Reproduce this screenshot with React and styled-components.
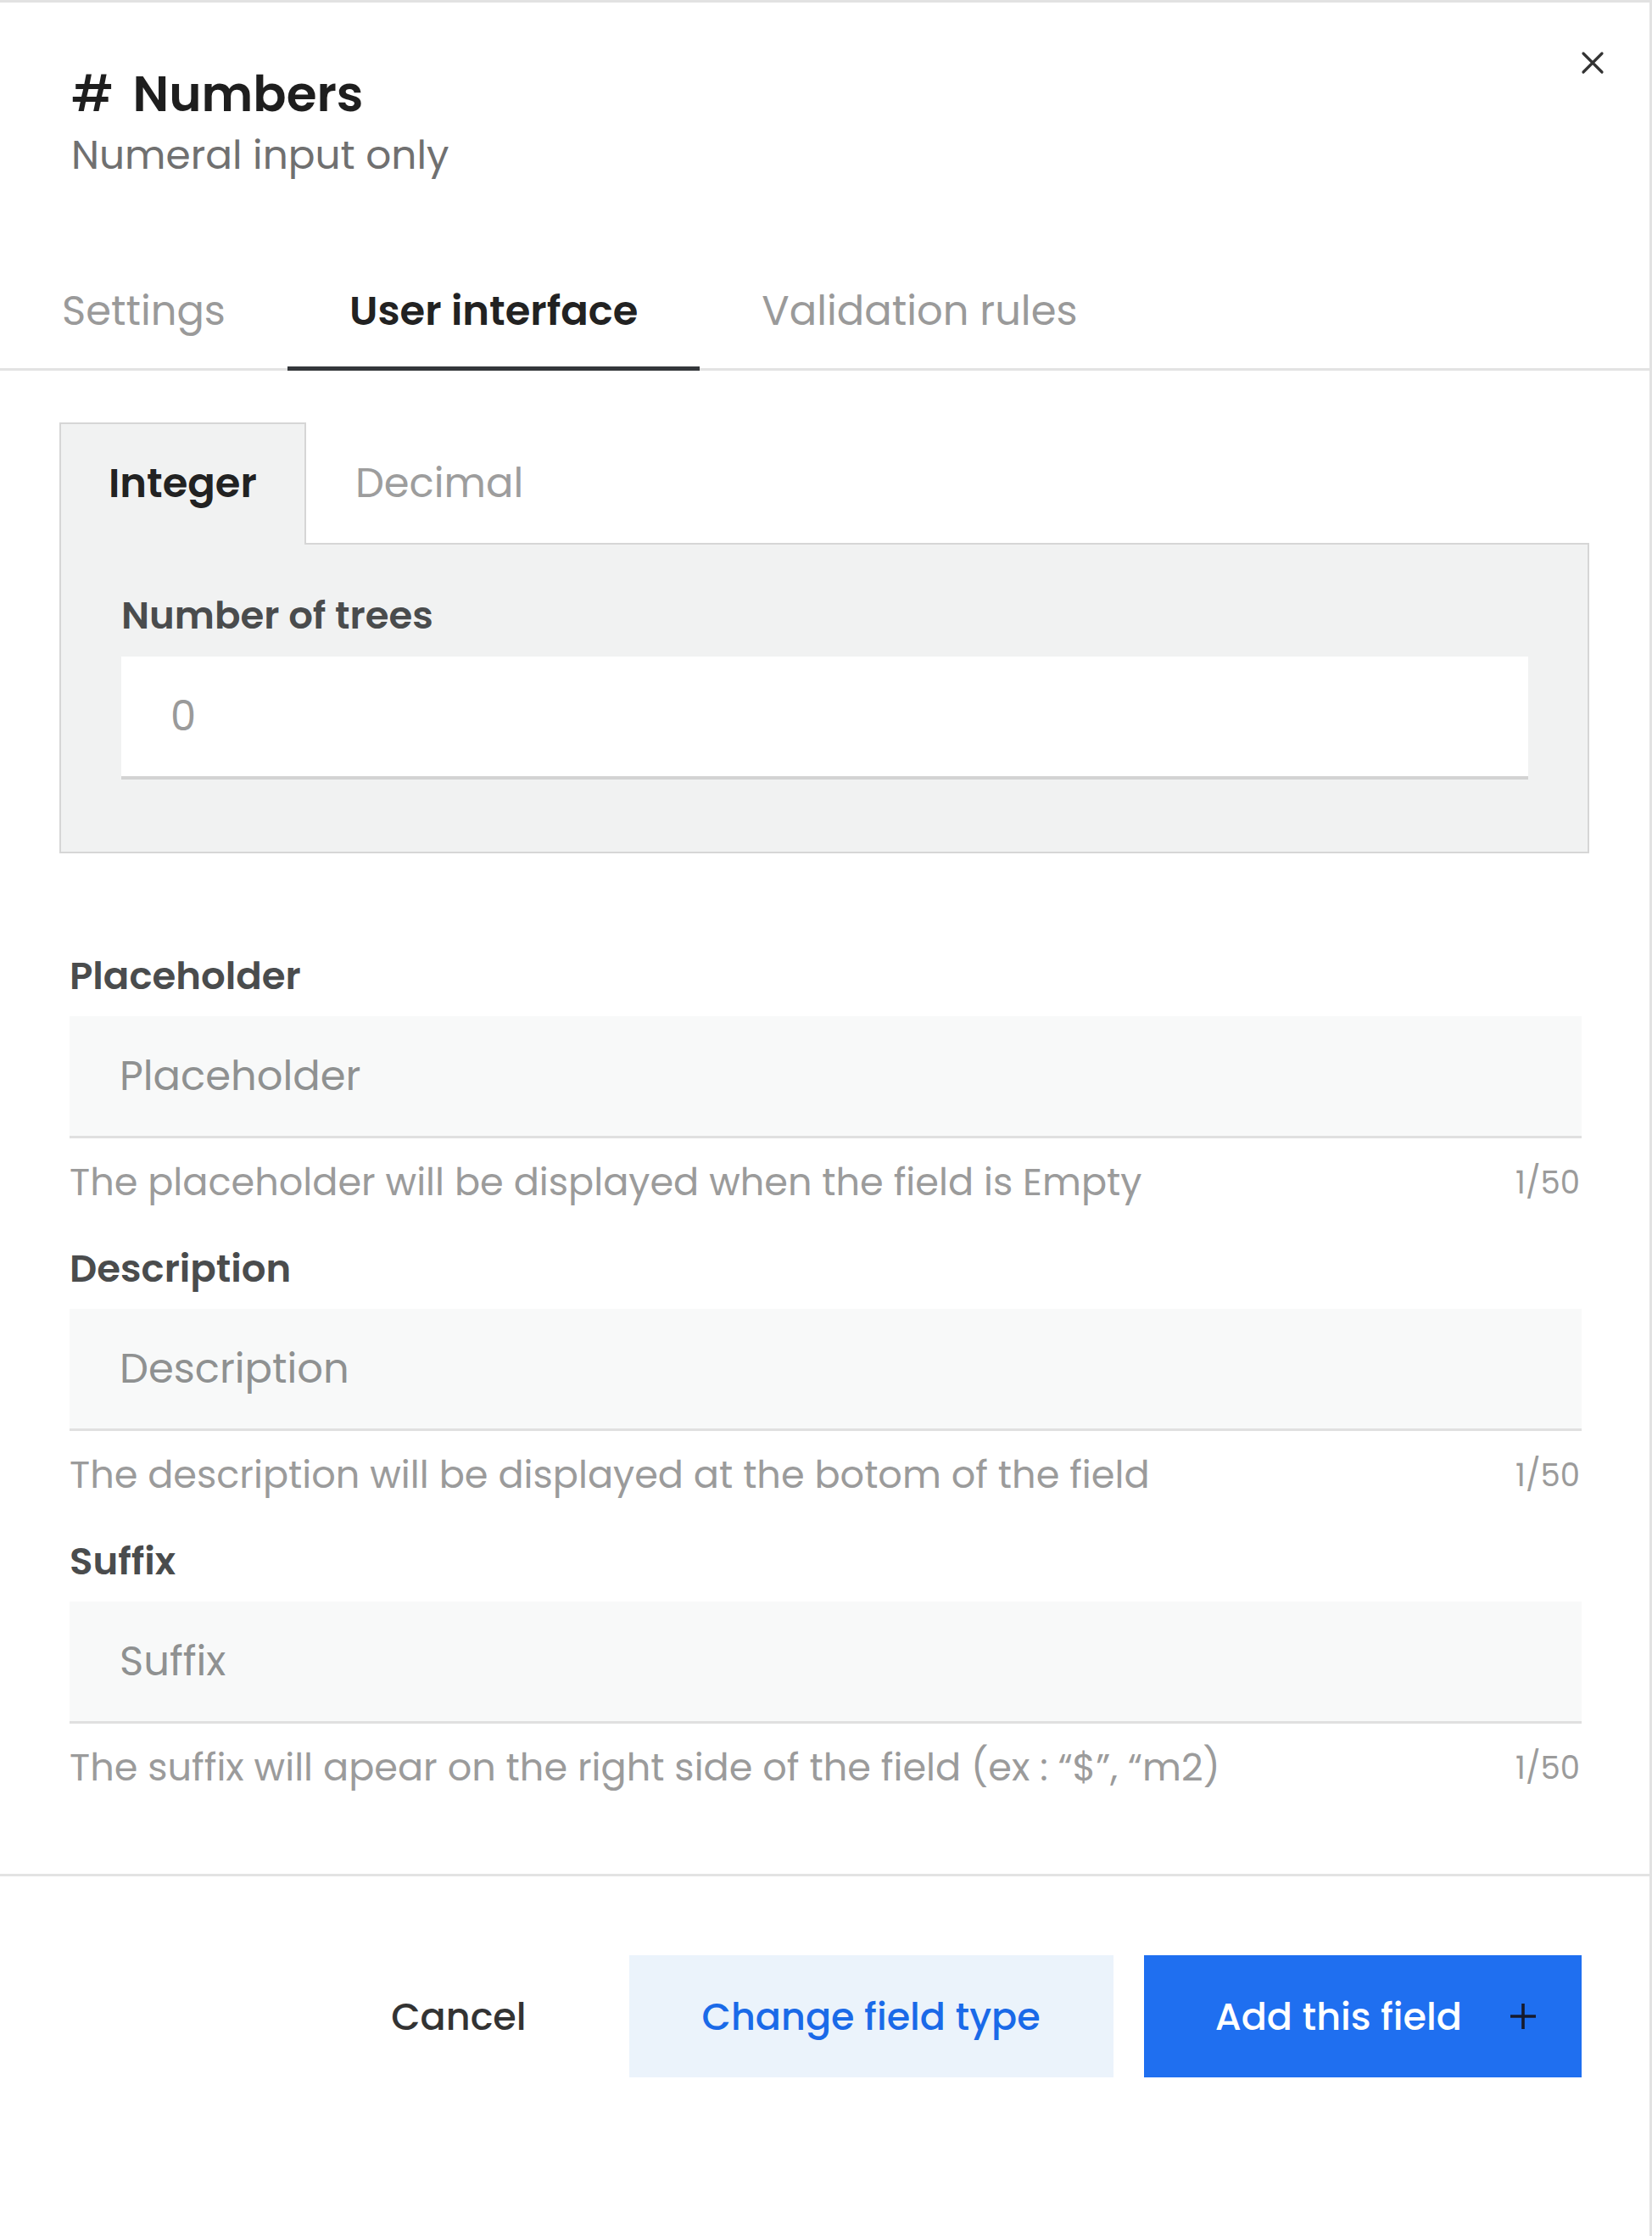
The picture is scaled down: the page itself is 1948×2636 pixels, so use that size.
import React, { useState } from "react"
import styled, { createGlobalStyle } from "styled-components"

const GlobalStyle = createGlobalStyle`
  html, body {
    margin: 0;
    padding: 0;
    background: #ffffff;
  }
  body {
    font-family: Poppins, Inter, "Liberation Sans", sans-serif;
    -webkit-font-smoothing: antialiased;
  }
  * {
    box-sizing: border-box;
  }
`

const tabs = ["Settings", "User interface", "Validation rules"]
const numberTypes = ["Integer", "Decimal"]

const fields = [
  {
    label: "Placeholder",
    placeholder: "Placeholder",
    help: "The placeholder will be displayed when the field is Empty",
  },
  {
    label: "Description",
    placeholder: "Description",
    help: "The description will be displayed at the botom of the field",
  },
  {
    label: "Suffix",
    placeholder: "Suffix",
    help: "The suffix will apear on the right side of the field (ex : “$”, “m2)",
  },
]

const CloseIcon = () => (
  <svg width="28" height="28" viewBox="0 0 28 28" fill="none">
    <path d="M3 3L25 25M25 3L3 25" stroke="#333333" strokeWidth="3.2" strokeLinecap="round" />
  </svg>
)

const PlusIcon = () => (
  <svg width="32" height="32" viewBox="0 0 32 32" fill="none">
    <path d="M16 1V31M1 16H31" stroke="#161a2c" strokeWidth="3.6" />
  </svg>
)

const App = () => {
  const [activeTab, setActiveTab] = useState("User interface")
  const [numberType, setNumberType] = useState("Integer")

  return (
    <>
      <GlobalStyle />
      <Panel>
        <Header>
          <TitleBlock>
            <Title>
              <Hash>#</Hash>Numbers
            </Title>
            <Subtitle>Numeral input only</Subtitle>
          </TitleBlock>
          <CloseButton aria-label="Close">
            <CloseIcon />
          </CloseButton>
        </Header>

        <TabBar>
          {tabs.map((tab) => (
            <Tab key={tab} active={tab === activeTab} onClick={() => setActiveTab(tab)}>
              {tab}
            </Tab>
          ))}
        </TabBar>

        <Preview>
          <TypeTabs>
            {numberTypes.map((type) => (
              <TypeTab key={type} active={type === numberType} onClick={() => setNumberType(type)}>
                {type}
              </TypeTab>
            ))}
          </TypeTabs>
          <TypePanel>
            <PanelLabel>Number of trees</PanelLabel>
            <PreviewInput defaultValue="0" />
          </TypePanel>
        </Preview>

        <Fields>
          {fields.map((field) => (
            <FieldGroup key={field.label}>
              <FieldLabel>{field.label}</FieldLabel>
              <FieldInput placeholder={field.placeholder} />
              <HelpRow>
                <span>{field.help}</span>
                <Counter>1/50</Counter>
              </HelpRow>
            </FieldGroup>
          ))}
        </Fields>

        <Footer>
          <Button variant="ghost">Cancel</Button>
          <Button variant="soft">Change field type</Button>
          <Button variant="primary">
            Add this field
            <PlusIcon />
          </Button>
        </Footer>
      </Panel>
    </>
  )
}

const Panel = styled.div`
  width: 1948px;
  min-height: 2636px;
  background: #ffffff;
  border-top: 3px solid #e2e2e2;
  border-right: 3px solid #e2e2e2;
`

const Header = styled.div`
  display: flex;
  justify-content: space-between;
  align-items: flex-start;
  padding: 57px 53px 0 84px;
`

const TitleBlock = styled.div`
  display: flex;
  flex-direction: column;
  padding-top: 16px;
`

const Title = styled.h1`
  margin: 0;
  font-size: 58px;
  line-height: 70px;
  font-weight: 600;
  color: #1e1e1e;
`

const Hash = styled.span`
  margin-right: 22px;
  font-weight: 500;
`

const Subtitle = styled.p`
  margin: 9px 0 0 0;
  font-size: 47px;
  line-height: 56px;
  font-weight: 400;
  color: #707070;
`

const CloseButton = styled.button`
  display: flex;
  padding: 0;
  border: none;
  background: none;
  cursor: pointer;
`

const TabBar = styled.div`
  display: flex;
  margin-top: 84px;
  border-bottom: 3px solid #e3e3e3;
`

const Tab = styled.div`
  display: flex;
  align-items: center;
  height: 142px;
  padding: 6px 73px 0;
  margin-bottom: -3px;
  font-size: 48px;
  font-weight: ${({ active }) => (active ? 600 : 400)};
  color: ${({ active }) => (active ? "#222222" : "#9a9a9a")};
  border-bottom: 5px solid ${({ active }) => (active ? "#34373b" : "transparent")};
  cursor: pointer;
`

const Preview = styled.div`
  padding: 61px 71px 0 70px;
`

const TypeTabs = styled.div`
  display: flex;
`

const TypeTab = styled.div`
  position: relative;
  z-index: 1;
  display: flex;
  align-items: center;
  height: 144px;
  margin-bottom: -2px;
  padding: 0 56px 2px;
  font-size: 48px;
  font-weight: ${({ active }) => (active ? 600 : 400)};
  color: ${({ active }) => (active ? "#222222" : "#9d9d9d")};
  background: ${({ active }) => (active ? "#f1f2f2" : "transparent")};
  border: 2px solid ${({ active }) => (active ? "#d6d6d6" : "transparent")};
  border-bottom: none;
  cursor: pointer;
`

const TypePanel = styled.div`
  display: flex;
  flex-direction: column;
  padding: 58px 70px 85px 71px;
  background: #f1f2f2;
  border: 2px solid #d6d6d6;
`

const PanelLabel = styled.label`
  font-size: 45px;
  line-height: 52px;
  font-weight: 600;
  color: #4a4c4d;
  margin-bottom: 22px;
`

const PreviewInput = styled.input`
  height: 145px;
  padding: 0 58px;
  border: none;
  border-bottom: 4px solid #d3d3d3;
  background: #ffffff;
  font-family: inherit;
  font-size: 48px;
  color: #9a9a9a;
  outline: none;
`

const Fields = styled.div`
  display: flex;
  flex-direction: column;
  gap: 46px;
  padding: 117px 80px 97px 82px;
`

const FieldGroup = styled.div`
  display: flex;
  flex-direction: column;
`

const FieldLabel = styled.label`
  font-size: 45px;
  line-height: 56px;
  font-weight: 600;
  color: #4a4c4d;
  margin-bottom: 19px;
`

const FieldInput = styled.input`
  height: 144px;
  padding: 0 59px;
  border: none;
  border-bottom: 3px solid #e0e0e0;
  background: #f8f9f9;
  font-family: inherit;
  font-size: 48px;
  color: #444444;
  outline: none;
  &::placeholder {
    color: #8f9191;
  }
`

const HelpRow = styled.div`
  display: flex;
  justify-content: space-between;
  align-items: center;
  margin-top: 24px;
  font-size: 44.6px;
  line-height: 56px;
  color: #9b9b9b;
`

const Counter = styled.span`
  font-size: 37px;
  padding-right: 2px;
`

const buttonColors = {
  ghost: { bg: "transparent", fg: "#333333", pad: "0 85px" },
  soft: { bg: "#ebf3fb", fg: "#1a6ae8", pad: "0 86px" },
  primary: { bg: "#1f6ff0", fg: "#ffffff", pad: "0 53px 0 84px" },
}

const Button = styled.button`
  display: flex;
  align-items: center;
  gap: 56px;
  height: 144px;
  padding: ${({ variant }) => buttonColors[variant].pad};
  border: none;
  background: ${({ variant }) => buttonColors[variant].bg};
  color: ${({ variant }) => buttonColors[variant].fg};
  font-family: inherit;
  font-size: 44.5px;
  font-weight: 500;
  cursor: pointer;
`

const Footer = styled.div`
  display: flex;
  justify-content: flex-end;
  gap: 36px;
  padding: 93px 80px 0 0;
  border-top: 3px solid #e3e3e3;
`

export default App
